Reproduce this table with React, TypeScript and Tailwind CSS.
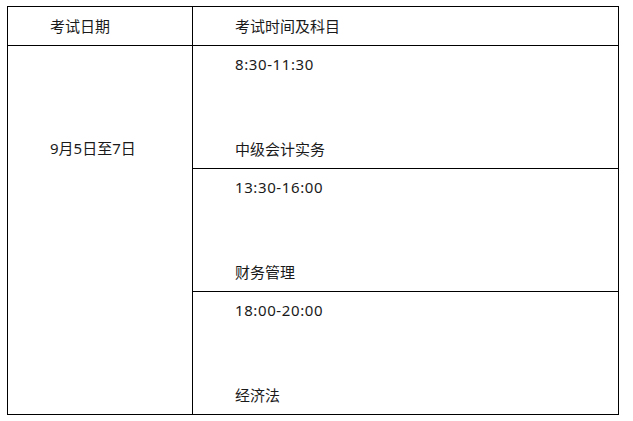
export default function App() {
  const rows = [
    { time: "8:30-11:30", subject: "中级会计实务" },
    { time: "13:30-16:00", subject: "财务管理" },
    { time: "18:00-20:00", subject: "经济法" },
  ];

  return (
    <div
      className="w-[633px] h-[421px] bg-white text-[15px] leading-[20px] text-[#1a1a1a]"
      style={{ fontFamily: '"Noto Sans", "Noto Sans CJK SC", sans-serif' }}
    >
      <div className="pl-[7px] pt-[6px]">
        <div className="w-[612px] border border-black">
          {/* header */}
          <div className="flex h-[39px] border-b border-black">
            <div className="w-[185px] border-r border-black pl-[42px] flex items-center">
              考试日期
            </div>
            <div className="flex-1 pl-[42px] flex items-center">考试时间及科目</div>
          </div>

          <div className="flex">
            {/* date column */}
            <div className="w-[185px] border-r border-black pl-[42px] pt-[92px]">
              9月5日至7日
            </div>

            {/* sessions */}
            <div className="flex-1 flex flex-col">
              {rows.map((r, i) => (
                <div
                  key={r.time}
                  className={
                    "pl-[42px] pt-[8px] pb-[9px] flex flex-col justify-between" +
                    (i < rows.length - 1 ? " h-[123px] border-b border-black" : " h-[122px]")
                  }
                >
                  <div className="tracking-[0.6px]">{r.time}</div>
                  <div>{r.subject}</div>
                </div>
              ))}
            </div>
          </div>
        </div>
      </div>
    </div>
  );
}
